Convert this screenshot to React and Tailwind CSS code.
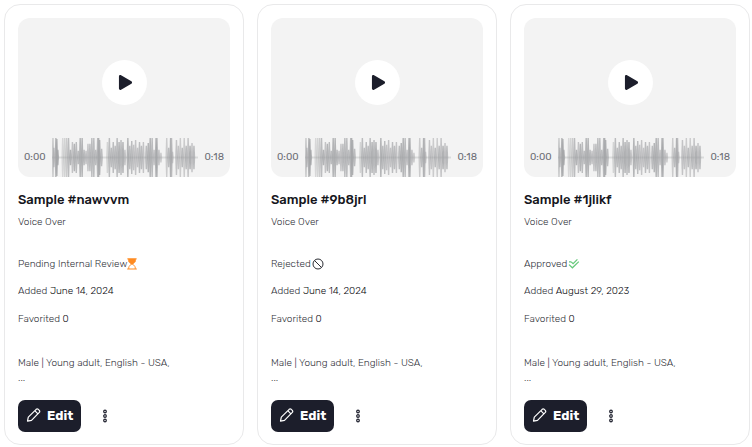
import { FaPlay } from "react-icons/fa";

const cards = [
  { id: "nawvvm", status: "Pending Internal Review", icon: "hourglass", added: "June 14, 2024" },
  { id: "9b8jrl", status: "Rejected", icon: "ban", added: "June 14, 2024" },
  { id: "1jlikf", status: "Approved", icon: "checks", added: "August 29, 2023" },
];

// Each bar: [x, half height, opacity]
const bars = [
  [1, 20, 0.55], [2, 10, 0.6], [4, 20, 0.8], [5, 19, 0.8], [6, 8, 0.8],
  [11, 20, 0.35], [13, 20, 0.4], [15, 20, 0.5], [17, 20, 0.7], [19, 8, 0.8], [21, 16, 0.6], [23, 14, 0.8], [25, 16, 0.7], [27, 7, 0.7],
  [29, 20, 0.8], [31, 20, 0.8], [33, 8, 0.7], [35, 7, 0.6], [37, 14, 0.6], [39, 14, 0.7], [41, 20, 0.7], [43, 20, 0.7],
  [45, 8, 0.7], [47, 20, 0.7], [48, 20, 0.8], [49, 18, 0.8], [51, 9, 0.7],
  [57, 16, 0.4], [59, 20, 0.7], [61, 10, 0.7], [63, 16, 0.7], [65, 12, 0.7], [67, 20, 0.7], [69, 16, 0.8], [71, 18, 0.7], [73, 16, 0.8], [75, 8, 0.6],
  [78, 20, 0.8], [80, 12, 0.7], [82, 17, 0.7], [84, 13, 0.6], [86, 18, 0.6], [88, 10, 0.6], [90, 16, 0.7], [92, 12, 0.7], [94, 16, 0.6],
  [97, 12, 0.7], [99, 15, 0.8], [101, 20, 0.8], [103, 20, 0.7], [105, 8, 0.6], [107, 20, 0.8], [108, 20, 0.7], [110, 8, 0.6], [112, 5, 0.5],
  [118, 20, 0.5], [120, 10, 0.7], [122, 20, 0.8], [123, 20, 0.6], [124, 6, 0.5],
  [128, 18, 0.6], [130, 12, 0.6], [132, 20, 0.5], [134, 10, 0.7], [136, 20, 0.5], [138, 12, 0.7], [140, 20, 0.6], [142, 12, 0.8], [144, 15, 0.6], [146, 12, 0.7],
];

function Waveform() {
  return (
    <svg viewBox="0 0 151 40" preserveAspectRatio="none" className="h-[39px] min-w-0 flex-1" fill="#a3a4a6" aria-hidden="true">
      <rect x="0" y="19" width="151" height="2" opacity="0.3" />
      {bars.map(([x, h, o]) => (
        <path key={x} opacity={o} d={`M${x - 1.3} 20L${x - 0.7} ${20 - h}h1.4L${x + 1.3} 20L${x + 0.7} ${20 + h}h-1.4Z`} />
      ))}
    </svg>
  );
}

function StatusIcon({ kind }) {
  if (kind === "hourglass") {
    return (
      <svg viewBox="0 0 10 12" className="h-3 w-2.5" aria-hidden="true">
        <path d="M1.8 11V8.6L4.6 6h.8l2.8 2.6V11" fill="#fff" stroke="#ff8b21" strokeWidth=".9" />
        <path d="M.4.2h9.2v1.2H8.8v2.2L5.8 6.6H4.2L1.2 3.6V1.4H.4ZM.2 10.4h9.6v1.2H.2Z" fill="#ff8b21" />
      </svg>
    );
  }
  if (kind === "ban") {
    return (
      <svg viewBox="0 0 12 12" className="ml-px size-3" fill="none" stroke="#2b2d33" aria-hidden="true">
        <circle cx="6" cy="6" r="5" />
        <path d="m2.5 2.5 7 7" />
      </svg>
    );
  }
  return (
    <svg viewBox="0 0 12 12" className="ml-px size-3" fill="none" stroke="#65c87a" strokeWidth="1.2" aria-hidden="true">
      <path d="M1 3.8h2.2M3.2 3.8l1.9 1.9L9.4 1.4M1 6.6l3.4 3.2 6.4-6.2" />
    </svg>
  );
}

function Card({ id, status, icon, added }) {
  return (
    <article className="min-w-0 rounded-2xl border border-[#e9e9ea] p-[13px] pb-3">
      <div className="flex h-[159px] flex-col rounded-xl bg-[#f3f3f3]">
        <div className="flex flex-1 items-end justify-center pb-[33px]">
          <button type="button" aria-label="Play" className="flex size-[45px] items-center justify-center rounded-full bg-white">
            <FaPlay className="ml-0.5 size-[15px] text-[#1c1e2b]" />
          </button>
        </div>
        <div className="flex items-center gap-1.5 px-1.5 text-[10px] font-normal text-[#6b6d74]">
          <span>0:00</span>
          <Waveform />
          <span>0:18</span>
        </div>
      </div>
      <h2 className="mt-[15px] text-[13px] leading-4 font-medium text-[#15161c]">Sample #{id}</h2>
      <p className="mt-2 leading-3">Voice Over</p>
      <p className="mt-[30px] flex h-3 items-center leading-3">{status}<StatusIcon kind={icon} /></p>
      <p className="mt-[15px] leading-3">Added <span className="text-[#08090d]">{added}</span></p>
      <p className="mt-4 leading-3">Favorited <span className="text-[#08090d]">0</span></p>
      <p className="mt-8 leading-3">Male | Young adult, English - USA,</p>
      <p className="mt-[3px] leading-3 text-[#08090d]">...</p>
      <div className="mt-4 flex items-center gap-5">
        <button type="button" className="flex h-8 items-center gap-[5px] rounded-[7px] bg-[#1c1e2b] px-2 text-[13px] font-bold text-white">
          <svg viewBox="0 0 16 16" className="size-4" fill="none" stroke="currentColor" strokeWidth="1.2" strokeLinejoin="round" aria-hidden="true">
            <path d="m1.5 13.2.8-4L10.2 1.3q1-.9 2 0l1.1 1.1q.9 1 0 2L5.5 12.3ZM8.8 2.7l3.1 3.1" />
          </svg>
          Edit
        </button>
        <button type="button" aria-label="More options" className="flex h-8 w-2 items-center justify-center text-[#1c1e2b]">
          <svg viewBox="0 0 6 14" className="h-3.5 w-1.5" fill="none" stroke="currentColor" strokeWidth="1.2" aria-hidden="true">
            <circle cx="3" cy="2.5" r="1.3" />
            <circle cx="3" cy="7" r="1.3" />
            <circle cx="3" cy="11.5" r="1.3" />
          </svg>
        </button>
      </div>
    </article>
  );
}

export default function App() {
  return (
    <main className="grid grid-cols-3 gap-[13px] bg-white pt-1 pr-0.5 pl-1 font-[Rubik,Inter,sans-serif] text-[10px] font-light text-[#2f3138]">
      {cards.map((card) => <Card key={card.id} {...card} />)}
    </main>
  );
}
